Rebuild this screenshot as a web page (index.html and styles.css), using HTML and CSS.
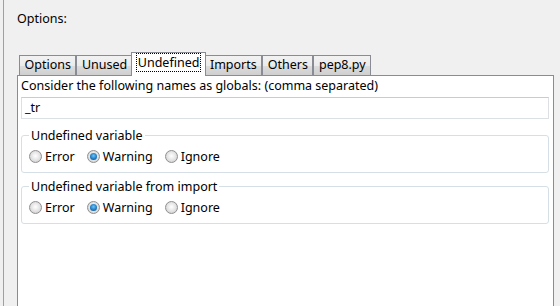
FILE: index.html
```html
<!DOCTYPE html>
<html>
<head>
<meta charset="utf-8">
<link rel="stylesheet" href="styles.css">
</head>
<body>
<div class="frame">
  <div class="title">Options:</div>
  <div class="tabs">
    <div class="tab">Options</div>
    <div class="tab">Unused</div>
    <div class="tab selected"><span class="focus">Undefined</span></div>
    <div class="tab">Imports</div>
    <div class="tab">Others</div>
    <div class="tab">pep8.py</div>
  </div>
  <div class="pane">
    <div class="caption">Consider the following names as globals: (comma separated)</div>
    <div class="input">_tr</div>
    <fieldset class="group">
      <legend>Undefined variable</legend>
      <div class="radios">
        <label class="radio"><span class="dot"></span>Error</label>
        <label class="radio"><span class="dot on"></span>Warning</label>
        <label class="radio"><span class="dot"></span>Ignore</label>
      </div>
    </fieldset>
    <fieldset class="group">
      <legend>Undefined variable from import</legend>
      <div class="radios">
        <label class="radio"><span class="dot"></span>Error</label>
        <label class="radio"><span class="dot on"></span>Warning</label>
        <label class="radio"><span class="dot"></span>Ignore</label>
      </div>
    </fieldset>
  </div>
</div>
</body>
</html>
```

FILE: styles.css
```css
html, body {
  margin: 0;
  padding: 0;
  height: 306px;
  overflow: hidden;
  background: #f0f0f0;
  font-family: "Noto Sans", "Open Sans", sans-serif;
  font-size: 12.5px;
  color: #000;
}
.frame {
  margin-left: 3px;
  border-left: 1px solid #a0a0a0;
  height: 306px;
  padding-left: 13px;
  display: flex;
  flex-direction: column;
}
.title {
  margin-top: 10px;
  height: 17px;
  line-height: 17px;
}
.tabs {
  margin-top: 25px;
  margin-left: 2px;
  display: flex;
  align-items: flex-end;
  height: 23px;
}
.tab {
  line-height: 18px;
  padding: 0 4.5px;
  border: 1px solid #898c95;
  border-bottom: none;
  background: linear-gradient(#f2f2f2, #ebebeb 50%, #dddddd 51%, #cfcfcf);
  box-sizing: border-box;
  height: 20px;
}
.tab.selected {
  position: relative;
  z-index: 1;
  height: 24px;
  margin: 0 -2px -1px -2px;
  padding: 0 5px;
  background: #fff;
  line-height: 19px;
}
.focus {
  outline: 1px dotted #000;
  outline-offset: 0;
  display: inline-block;
  line-height: 17px;
  padding: 0 1px;
}
.pane {
  flex: 1;
  margin-right: 6px;
  background: #fff;
  border: 1px solid #898c95;
  border-bottom: none;
  padding: 0 3px;
  display: flex;
  flex-direction: column;
}
.caption {
  height: 17px;
  line-height: 17px;
  margin-top: 1px;
}
.input {
  margin-top: 3px;
  height: 22px;
  line-height: 20px;
  border: 1px solid #dcdfe4;
  border-top-color: #c8ccd2;
  box-sizing: border-box;
  padding-left: 3px;
  margin-right: 1px;
}
.group {
  margin: 9px 1px 0 0;
  padding: 0 0 0 7px;
  border: 1px solid #d5dfe5;
  border-radius: 3px;
  height: 45px;
  box-sizing: border-box;
}
.group + .group {
  margin-top: 6px;
}
.group legend {
  padding: 0 2px;
  margin-left: 0;
  line-height: 15px;
}
.radios {
  display: flex;
  gap: 12px;
  margin-top: 5px;
}
.radio {
  display: flex;
  align-items: center;
  gap: 3px;
  height: 17px;
}
.dot {
  width: 13px;
  height: 13px;
  border-radius: 50%;
  box-sizing: border-box;
  border: 1px solid #909090;
  background: radial-gradient(circle at 50% 45%, #ffffff 0%, #eaeaea 40%, #c6c6c6 100%);
  display: flex;
  align-items: center;
  justify-content: center;
}
.dot.on::after {
  content: "";
  width: 7px;
  height: 7px;
  border-radius: 50%;
  background: radial-gradient(circle at 50% 40%, #6cc6f6 0%, #1f7cc6 55%, #123f6e 100%);
}
```
